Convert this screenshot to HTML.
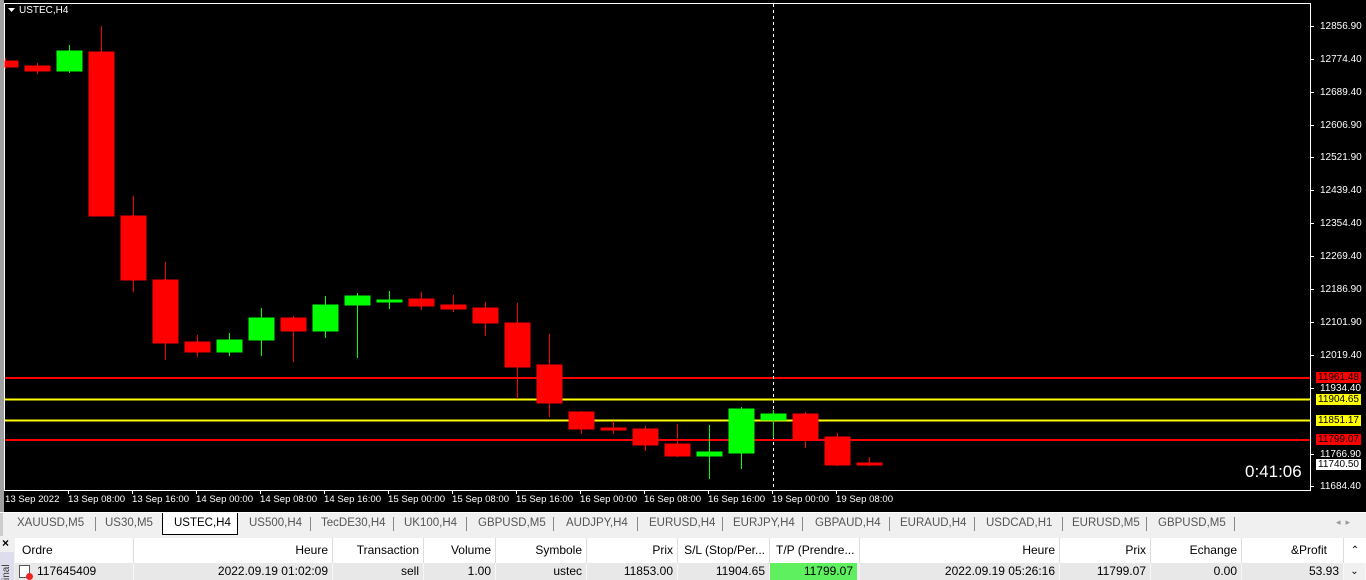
<!DOCTYPE html>
<html><head><meta charset="utf-8"><style>
*{margin:0;padding:0;box-sizing:border-box}
body{width:1366px;height:580px;overflow:hidden;background:#000;font-family:"Liberation Sans",sans-serif;position:relative}
.ax{position:absolute;color:#fff;font-size:10px;left:1320px;line-height:11px}
.tag{position:absolute;left:1316px;width:45px;height:11px;font-size:10px;line-height:11px;color:#000;padding-left:2px}
.dt{position:absolute;top:494px;color:#fff;font-size:9.6px}
#tabs{position:absolute;left:0;top:512px;width:1366px;height:24px;background:#f0f0f0;border-top:1px solid #fff}
.tb{position:absolute;top:4px;font-size:11.5px;color:#555}
.sp{position:absolute;top:4px;width:1px;height:14px;background:#888}
#tbl{position:absolute;left:0;top:536px;width:1366px;height:44px;background:#f0f0f0}
.h{position:absolute;top:2px;height:25px;background:#fff;border-right:1px solid #ddd;font-size:12px;line-height:25px;color:#000;padding-right:4px;text-align:right}
.c{position:absolute;top:27px;height:17px;background:#e8e8e8;font-size:12px;line-height:17px;text-align:right;padding-right:4px;border-right:1px solid #f8f8f8}
</style></head><body>
<div style="position:absolute;left:0;top:0;width:4px;height:512px;background:#a0a0a0"></div>
<svg width="1366" height="512" style="position:absolute;left:0;top:0">
<rect x="4.5" y="3.5" width="1306" height="487" fill="none" stroke="#fff"/>
<polygon points="8,8 15,8 11.5,12" fill="#fff"/>
<text x="19" y="13" fill="#fff" font-size="10" font-family="Liberation Sans">USTEC,H4</text>
<g fill="none" stroke-width="2">
<line x1="5" y1="378" x2="1310" y2="378" stroke="#f00"/>
<line x1="5" y1="399.5" x2="1310" y2="399.5" stroke="#ff0"/>
<line x1="5" y1="420.5" x2="1310" y2="420.5" stroke="#ff0"/>
<line x1="5" y1="440" x2="1310" y2="440" stroke="#f00"/>
</g>
<line x1="773.5" y1="4" x2="773.5" y2="490" stroke="#fff" stroke-dasharray="3,3"/>
<g stroke-width="1">
<g stroke="#f00" fill="#f00">
<line x1="5.5" y1="58" x2="5.5" y2="69"/><rect x="5" y="61" width="13" height="6"/>
<line x1="37.5" y1="63" x2="37.5" y2="74"/><rect x="25" y="66" width="25" height="5"/>
<line x1="101.5" y1="26" x2="101.5" y2="216"/><rect x="89" y="52" width="25" height="164"/>
<line x1="133.5" y1="196" x2="133.5" y2="292"/><rect x="121" y="216" width="25" height="64"/>
<line x1="165.5" y1="262" x2="165.5" y2="360"/><rect x="153" y="280" width="25" height="63"/>
<line x1="197.5" y1="335" x2="197.5" y2="357"/><rect x="185" y="342" width="25" height="10"/>
<line x1="293.5" y1="316" x2="293.5" y2="362"/><rect x="281" y="318" width="25" height="13"/>
<line x1="421.5" y1="292" x2="421.5" y2="310"/><rect x="409" y="299" width="25" height="7"/>
<line x1="453.5" y1="295" x2="453.5" y2="312"/><rect x="441" y="305" width="25" height="4"/>
<line x1="485.5" y1="302" x2="485.5" y2="336"/><rect x="473" y="308" width="25" height="15"/>
<line x1="517.5" y1="303" x2="517.5" y2="399"/><rect x="505" y="323" width="25" height="44"/>
<line x1="549.5" y1="334" x2="549.5" y2="417"/><rect x="537" y="365" width="25" height="38"/>
<line x1="581.5" y1="411" x2="581.5" y2="434"/><rect x="569" y="412" width="25" height="17"/>
<line x1="613.5" y1="421" x2="613.5" y2="434"/><rect x="601" y="428" width="25" height="2"/>
<line x1="645.5" y1="426" x2="645.5" y2="451"/><rect x="633" y="429" width="25" height="16"/>
<line x1="677.5" y1="424" x2="677.5" y2="457"/><rect x="665" y="444" width="25" height="12"/>
<line x1="805.5" y1="412" x2="805.5" y2="448"/><rect x="793" y="414" width="25" height="25"/>
<line x1="837.5" y1="433" x2="837.5" y2="466"/><rect x="825" y="437" width="25" height="28"/>
<line x1="869.5" y1="457" x2="869.5" y2="466"/><rect x="857" y="463" width="25" height="2"/>
</g>
<g stroke="#0f0" fill="#0f0">
<line x1="69.5" y1="45" x2="69.5" y2="73"/><rect x="57" y="51" width="25" height="20"/>
<line x1="229.5" y1="333" x2="229.5" y2="356"/><rect x="217" y="340" width="25" height="12"/>
<line x1="261.5" y1="308" x2="261.5" y2="356"/><rect x="249" y="318" width="25" height="22"/>
<line x1="325.5" y1="296" x2="325.5" y2="338"/><rect x="313" y="305" width="25" height="26"/>
<line x1="357.5" y1="293" x2="357.5" y2="358"/><rect x="345" y="296" width="25" height="9"/>
<line x1="389.5" y1="291" x2="389.5" y2="309"/><rect x="377" y="300" width="25" height="2"/>
<line x1="709.5" y1="425" x2="709.5" y2="479"/><rect x="697" y="452" width="25" height="4"/>
<line x1="741.5" y1="407" x2="741.5" y2="469"/><rect x="729" y="409" width="25" height="44"/>
<line x1="773.5" y1="410" x2="773.5" y2="438"/><rect x="761" y="414" width="25" height="6"/>
</g>
</g>
<g stroke="#fff">
<line x1="5" y1="490.5" x2="1310" y2="490.5"/>
<path d="M68.5 490v4M132.5 490v4M196.5 490v4M260.5 490v4M324.5 490v4M388.5 490v4M452.5 490v4M516.5 490v4M580.5 490v4M644.5 490v4M708.5 490v4M772.5 490v4M836.5 490v4"/>
<path d="M1310 26.5h4M1310 59.5h4M1310 92.5h4M1310 125.5h4M1310 157.5h4M1310 190.5h4M1310 223.5h4M1310 256.5h4M1310 289.5h4M1310 322.5h4M1310 355.5h4M1310 388.5h4M1310 454.5h4M1310 486.5h4"/>
</g>
<text x="1245" y="477" fill="#fff" font-size="17" font-family="Liberation Sans">0:41:06</text>
</svg>
<div class="ax" style="top:21px">12856.90</div>
<div class="ax" style="top:54px">12774.40</div>
<div class="ax" style="top:87px">12689.40</div>
<div class="ax" style="top:120px">12606.90</div>
<div class="ax" style="top:152px">12521.90</div>
<div class="ax" style="top:185px">12439.40</div>
<div class="ax" style="top:218px">12354.40</div>
<div class="ax" style="top:251px">12269.40</div>
<div class="ax" style="top:284px">12186.90</div>
<div class="ax" style="top:317px">12101.90</div>
<div class="ax" style="top:350px">12019.40</div>
<div class="ax" style="top:383px">11934.40</div>
<div class="ax" style="top:449px">11766.90</div>
<div class="ax" style="top:481px">11684.40</div>
<div class="tag" style="top:372px;background:#f00">11961.48</div>
<div class="tag" style="top:394px;background:#ff0">11904.65</div>
<div class="tag" style="top:415px;background:#ff0">11851.17</div>
<div class="tag" style="top:434px;background:#f00">11799.07</div>
<div class="tag" style="top:459px;background:#fff">11740.50</div>
<div class="dt" style="left:5px">13 Sep 2022</div>
<div class="dt" style="left:68px">13 Sep 08:00</div>
<div class="dt" style="left:132px">13 Sep 16:00</div>
<div class="dt" style="left:196px">14 Sep 00:00</div>
<div class="dt" style="left:260px">14 Sep 08:00</div>
<div class="dt" style="left:324px">14 Sep 16:00</div>
<div class="dt" style="left:388px">15 Sep 00:00</div>
<div class="dt" style="left:452px">15 Sep 08:00</div>
<div class="dt" style="left:516px">15 Sep 16:00</div>
<div class="dt" style="left:580px">16 Sep 00:00</div>
<div class="dt" style="left:644px">16 Sep 08:00</div>
<div class="dt" style="left:708px">16 Sep 16:00</div>
<div class="dt" style="left:772px">19 Sep 00:00</div>
<div class="dt" style="left:836px">19 Sep 08:00</div>
<div id="tabs">
<div style="position:absolute;left:0;top:0;width:3px;height:24px;background:#ccc"></div>
<div style="position:absolute;left:162px;top:0;width:76px;height:22px;background:#fff;border:1px solid #000;border-top:none"></div>
<div class="tb" style="left:17px">XAUUSD,M5</div><div class="sp" style="left:95px"></div>
<div class="tb" style="left:105px">US30,M5</div>
<div class="tb" style="left:174px;color:#000">USTEC,H4</div>
<div class="tb" style="left:249px">US500,H4</div><div class="sp" style="left:310px"></div>
<div class="tb" style="left:321px">TecDE30,H4</div><div class="sp" style="left:393px"></div>
<div class="tb" style="left:404px">UK100,H4</div><div class="sp" style="left:466px"></div>
<div class="tb" style="left:478px">GBPUSD,M5</div><div class="sp" style="left:553px"></div>
<div class="tb" style="left:566px">AUDJPY,H4</div><div class="sp" style="left:637px"></div>
<div class="tb" style="left:649px">EURUSD,H4</div><div class="sp" style="left:722px"></div>
<div class="tb" style="left:733px">EURJPY,H4</div><div class="sp" style="left:802px"></div>
<div class="tb" style="left:815px">GBPAUD,H4</div><div class="sp" style="left:889px"></div>
<div class="tb" style="left:900px">EURAUD,H4</div><div class="sp" style="left:974px"></div>
<div class="tb" style="left:986px">USDCAD,H1</div><div class="sp" style="left:1062px"></div>
<div class="tb" style="left:1072px">EURUSD,M5</div><div class="sp" style="left:1146px"></div>
<div class="tb" style="left:1158px">GBPUSD,M5</div><div class="sp" style="left:1234px"></div>
<div class="tb" style="left:1336px;font-size:9px;color:#999">◂ &nbsp;▸</div>
</div>
<div id="tbl">
<div style="position:absolute;left:2px;top:0;font-size:12px;font-weight:bold">×</div>
<div style="position:absolute;left:0;top:16px;width:14px;height:28px;background:#dde;font-size:10px;color:#333;writing-mode:vertical-rl;transform:rotate(180deg);line-height:14px">inal</div>
<div class="h" style="left:15px;width:119px;text-align:left;padding-left:7px">Ordre</div>
<div class="h" style="left:134px;width:199px">Heure</div>
<div class="h" style="left:333px;width:91px">Transaction</div>
<div class="h" style="left:424px;width:72px">Volume</div>
<div class="h" style="left:496px;width:91px">Symbole</div>
<div class="h" style="left:587px;width:91px">Prix</div>
<div class="h" style="left:678px;width:92px">S/L (Stop/Per...</div>
<div class="h" style="left:770px;width:90px;text-align:left;padding-left:6px">T/P (Prendre...</div>
<div class="h" style="left:860px;width:200px">Heure</div>
<div class="h" style="left:1060px;width:91px">Prix</div>
<div class="h" style="left:1151px;width:91px">Echange</div>
<div class="h" style="left:1242px;width:102px;padding-right:16px">&amp;Profit</div>
<div class="h" style="left:1344px;width:22px;border:none;text-align:center;padding:0;font-size:10px">⌃</div>
<div class="c" style="left:15px;width:119px;text-align:left;padding-left:22px">117645409</div>
<div style="position:absolute;left:19px;top:29px;width:11px;height:13px;border:1px solid #555;background:#fff"></div>
<div style="position:absolute;left:26px;top:37px;width:7px;height:7px;border-radius:50%;background:#e22"></div>
<div class="c" style="left:134px;width:199px">2022.09.19 01:02:09</div>
<div class="c" style="left:333px;width:91px">sell</div>
<div class="c" style="left:424px;width:72px">1.00</div>
<div class="c" style="left:496px;width:91px">ustec</div>
<div class="c" style="left:587px;width:91px">11853.00</div>
<div class="c" style="left:678px;width:92px">11904.65</div>
<div class="c" style="left:770px;width:88px;background:#5ef05e">11799.07</div>
<div class="c" style="left:860px;width:200px">2022.09.19 05:26:16</div>
<div class="c" style="left:1060px;width:91px">11799.07</div>
<div class="c" style="left:1151px;width:91px">0.00</div>
<div class="c" style="left:1242px;width:102px">53.93</div>
<div class="c" style="left:1344px;width:22px;background:#f0f0f0;text-align:center;padding:0;font-size:10px">⌄</div>
</div>
</body></html>
